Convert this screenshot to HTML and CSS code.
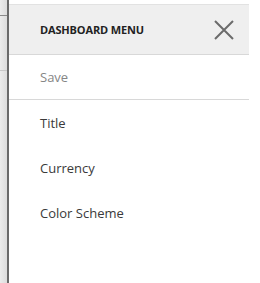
FILE: index.html
```html
<!DOCTYPE html>
<html>
<head>
<meta charset="utf-8">
<link rel="stylesheet" href="styles.css">
</head>
<body>
<div class="page">
  <div class="strip">
    <div class="strip-line one"></div>
    <div class="strip-line two"></div>
  </div>
  <div class="panel">
    <div class="header">
      <span class="title">DASHBOARD MENU</span>
      <svg class="close" width="22" height="20" viewBox="0 0 22 20">
        <path d="M2 1 L20 19 M20 1 L2 19" stroke="#6b6b6b" stroke-width="2" fill="none"/>
      </svg>
    </div>
    <div class="item save">Save</div>
    <div class="item">Title</div>
    <div class="item">Currency</div>
    <div class="item">Color Scheme</div>
  </div>
</div>
</body>
</html>
```
FILE: styles.css
```css
html, body {
  margin: 0;
  padding: 0;
  background: #fff;
}
.page {
  display: flex;
  width: 260px;
  height: 283px;
  font-family: "Open Sans", "Noto Sans", sans-serif;
}
.strip {
  width: 7px;
  background: linear-gradient(to right, #ececec, #dcdcdc);
  border-right: 2px solid #6a6a6a;
  display: flex;
  flex-direction: column;
}
.strip-line {
  height: 1px;
  background: #8a8a8a;
}
.strip-line.one {
  margin-top: 15px;
}
.strip-line.two {
  margin-top: 54px;
  background: #c8c8c8;
}
.panel {
  width: 240px;
  padding-top: 4px;
  display: flex;
  flex-direction: column;
}
.header {
  height: 49px;
  background: #efefef;
  border-top: 1px solid #e2e2e2;
  border-bottom: 1px solid #d8d8d8;
  display: flex;
  align-items: center;
  justify-content: space-between;
  padding: 0 14px 0 31px;
}
.title {
  font-size: 11px;
  font-weight: 700;
  color: #222;
  letter-spacing: -0.15px;
}
.close {
  display: block;
}
.item {
  height: 45px;
  display: flex;
  align-items: center;
  padding-left: 31px;
  font-size: 13px;
  color: #3a3a3a;
}
.item.save {
  height: 44px;
  color: #858585;
  border-bottom: 1px solid #d8d8d8;
}
```
